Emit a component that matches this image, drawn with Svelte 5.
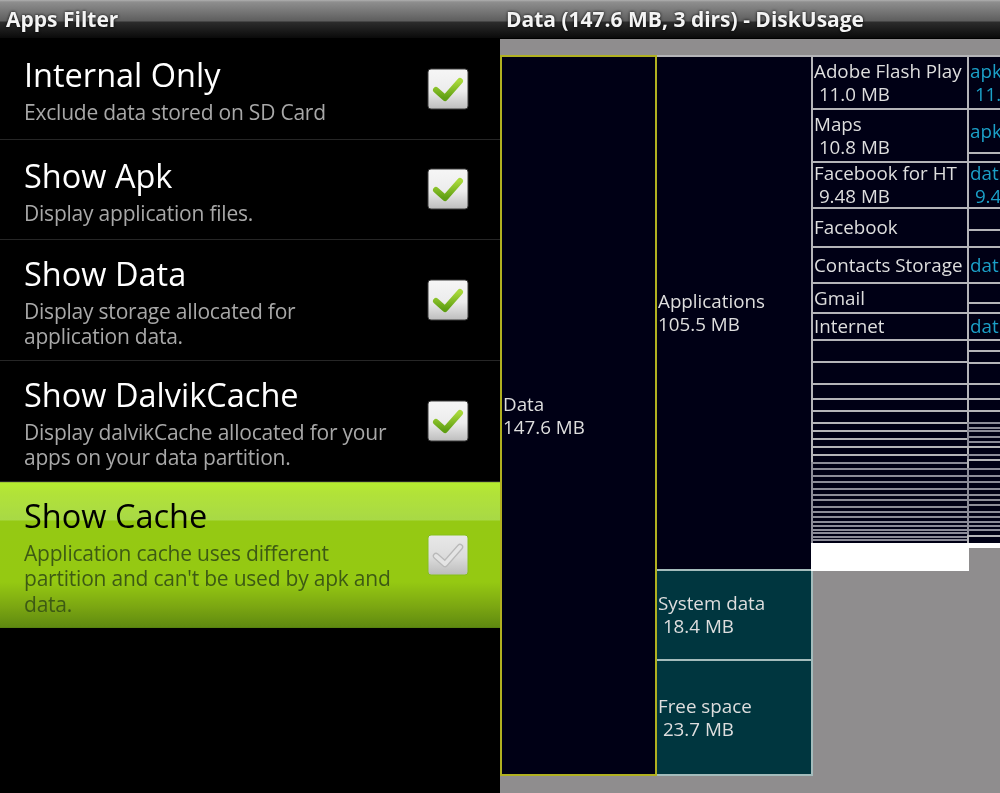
<script>
  // Filter options on the left pane
  const filters = [
    { title: 'Internal Only', summary: ['Exclude data stored on SD Card'], height: 101 },
    { title: 'Show Apk', summary: ['Display application files.'], height: 100 },
    { title: 'Show Data', summary: ['Display storage allocated for', 'application data.'], height: 121 },
    { title: 'Show DalvikCache', summary: ['Display dalvikCache allocated for your', 'apps on your data partition.'], height: 121 },
    { title: 'Show Cache', summary: ['Application cache uses different', "partition and can't be used by apk and", 'data.'], height: 146, active: true }
  ];

  // Row edges of the two right-hand treemap columns, in screen pixels
  const appEdges = [56, 109, 162, 208, 247, 283, 313, 340, 362, 384, 399, 411, 423, 431, 439, 447, 455, 463, 469, 476, 482, 489, 495, 500, 507, 512, 517, 522, 526, 530, 533, 537, 540, 544];
  const fileEdges = [56, 109, 153, 162, 208, 230, 247, 283, 303, 313, 340, 351, 363, 384, 399, 411, 423, 428, 431, 437, 442, 447, 455, 460, 469, 476, 482, 489, 495, 500, 505, 512, 517, 522, 526, 530, 536, 544];

  const appLabels = {
    56: ['Adobe Flash Play', ' 11.0 MB'],
    109: ['Maps', ' 10.8 MB'],
    162: ['Facebook for HT', ' 9.48 MB'],
    208: ['Facebook'],
    247: ['Contacts Storage'],
    283: ['Gmail'],
    313: ['Internet']
  };
  const fileLabels = {
    56: ['apk', ' 11.0 MB'],
    109: ['apk'],
    162: ['dat', ' 9.48 MB'],
    247: ['dat'],
    313: ['dat']
  };

  // very thin rows read as grey bands rather than white lines
  function column(x, w, edges, labels, kind) {
    return edges.slice(0, -1).map((y, i) => {
      const h = edges[i + 1] - y;
      return { x, y, w, h, lines: labels[y] || [], kind: h < 8 ? kind + ' thin' : kind };
    });
  }

  const nodes = [
    { x: 501, y: 56, w: 155, h: 719, lines: ['Data', '147.6 MB'], kind: 'root' },
    { x: 656, y: 56, w: 156, h: 514, lines: ['Applications', '105.5 MB'], kind: 'dir' },
    { x: 656, y: 570, w: 156, h: 90, lines: ['System data', ' 18.4 MB'], kind: 'teal' },
    { x: 656, y: 660, w: 156, h: 115, lines: ['Free space', ' 23.7 MB'], kind: 'teal' },
    ...column(812, 156, appEdges, appLabels, 'dir'),
    { x: 812, y: 544, w: 156, h: 26, lines: [], kind: 'blank' },
    ...column(968, 40, fileEdges, fileLabels, 'file'),
    { x: 968, y: 544, w: 40, h: 3, lines: [], kind: 'blank' }
  ];
</script>

{#snippet checkbox(off)}
  <svg class="check" viewBox="0 0 42 42" width="42" height="42">
    <defs>
      <linearGradient id={off ? 'boxOff' : 'boxOn'} x1="0" y1="0" x2="0" y2="1">
        <stop offset="0" stop-color={off ? '#e8e8e8' : '#f6f6f6'} />
        <stop offset="0.55" stop-color={off ? '#dcdcdc' : '#ececec'} />
        <stop offset="1" stop-color={off ? '#bcbcbc' : '#bdbdbd'} />
      </linearGradient>
      <linearGradient id="tick" x1="0" y1="0" x2="0" y2="1">
        <stop offset="0" stop-color="#a8d83a" />
        <stop offset="1" stop-color="#5f9f12" />
      </linearGradient>
    </defs>
    <rect x="1" y="1" width="40" height="40" rx="3" fill="url(#{off ? 'boxOff' : 'boxOn'})" stroke={off ? '#86c01a' : '#3a3a3a'} stroke-width="1" />
    {#if off}
      <path d="M9 22 L18 30 L33 13" fill="none" stroke="#b9b9b9" stroke-width="6.5" stroke-linecap="round" stroke-linejoin="round" />
      <path d="M9 22 L18 30 L33 13" fill="none" stroke="#e4e4e4" stroke-width="4" stroke-linecap="round" stroke-linejoin="round" />
    {:else}
      <path d="M9 22 L18 30 L33 13" fill="none" stroke="url(#tick)" stroke-width="6" stroke-linecap="round" stroke-linejoin="round" />
    {/if}
  </svg>
{/snippet}

<div class="screen">
  <section class="pane">
    <header class="titlebar">Apps Filter</header>
    <ul class="list">
      {#each filters as item}
        <li class="row" class:active={item.active} style="height: {item.height}px">
          <div class="text">
            <div class="title">{item.title}</div>
            {#each item.summary as line}
              <div class="summary">{line}</div>
            {/each}
          </div>
          {@render checkbox(item.active)}
        </li>
      {/each}
    </ul>
  </section>

  <section class="pane">
    <header class="titlebar right">Data (147.6 MB, 3 dirs) - DiskUsage</header>
    <div class="map">
      {#each nodes as n}
        <div class="node {n.kind}" style="left: {n.x - 501}px; top: {n.y - 40}px; width: {n.w + 2}px; height: {n.h + 2}px">
          {#each n.lines as line}
            <span>{line}</span>
          {/each}
        </div>
      {/each}
    </div>
  </section>
</div>

<style>
  :global(body) {
    background: #000;
  }

  .screen {
    display: grid;
    grid-template-columns: 500px 500px;
    width: 1000px;
    height: 793px;
    overflow: hidden;
    background: #000;
    font-family: "Open Sans", "Noto Sans", sans-serif;
    filter: blur(0.6px);
  }

  .pane {
    display: flex;
    flex-direction: column;
    min-width: 0;
  }

  .titlebar {
    height: 38px;
    flex: none;
    box-sizing: border-box;
    padding: 4px 0 0 6px;
    font-size: 21px;
    font-weight: 700;
    line-height: 30px;
    color: #f4f4f4;
    text-shadow: 0 0 3px #000;
    background: linear-gradient(#b0b0b0 0, #8e8e8e 2px, #5e5e5e 21px, #2c2c2c 22px, #0a0a0a 38px);
  }

  .titlebar.right {
    padding-left: 6px;
  }

  .list {
    list-style: none;
    margin: 0;
    padding: 1px 0 0;
  }

  .row {
    display: flex;
    align-items: center;
    justify-content: space-between;
    box-sizing: border-box;
    padding: 3px 31px 0 24px;
    border-bottom: 1px solid #262626;
    color: #fff;
  }

  .row:last-child {
    border-bottom: 0;
  }

  .title {
    font-size: 32.5px;
    line-height: 40px;
    margin-bottom: 5px;
  }

  .summary {
    font-size: 21px;
    letter-spacing: -0.22px;
    line-height: 25.5px;
    color: #a8a8a8;
  }

  .row.active {
    color: #000;
    background: linear-gradient(#8aa838 0, #b6ec30 1px, #b2e338 10px, #a8d946 38px, #95c913 39px, #95c912 100px, #7ba612 125px, #5f8a10 145px, #4f7a10 146px);
  }

  .active .summary {
    color: #3d5a14;
  }

  .check {
    flex: none;
    display: block;
    margin-bottom: 4px;
  }

  .map {
    position: relative;
    flex: 1;
    margin-top: 1px;
    background: #8f8d8e;
    overflow: hidden;
  }

  .node {
    position: absolute;
    box-sizing: border-box;
    display: flex;
    flex-direction: column;
    justify-content: center;
    padding-left: 1px;
    overflow: hidden;
    border: 2px solid #b4b4b8;
    background: #000015;
    color: #dedede;
    font-size: 18.8px;
    line-height: 23px;
    white-space: pre;
  }

  .node.thin {
    border-color: #8c8c98;
  }

  .node.root {
    border-color: #b0b020;
    z-index: 1;
  }

  .node.teal {
    background: #00363f;
    border-color: #a4bcbc;
  }

  .node.file {
    color: #1ba0c8;
  }

  .node.blank {
    background: #fff;
    border-color: #fff;
  }
</style>
